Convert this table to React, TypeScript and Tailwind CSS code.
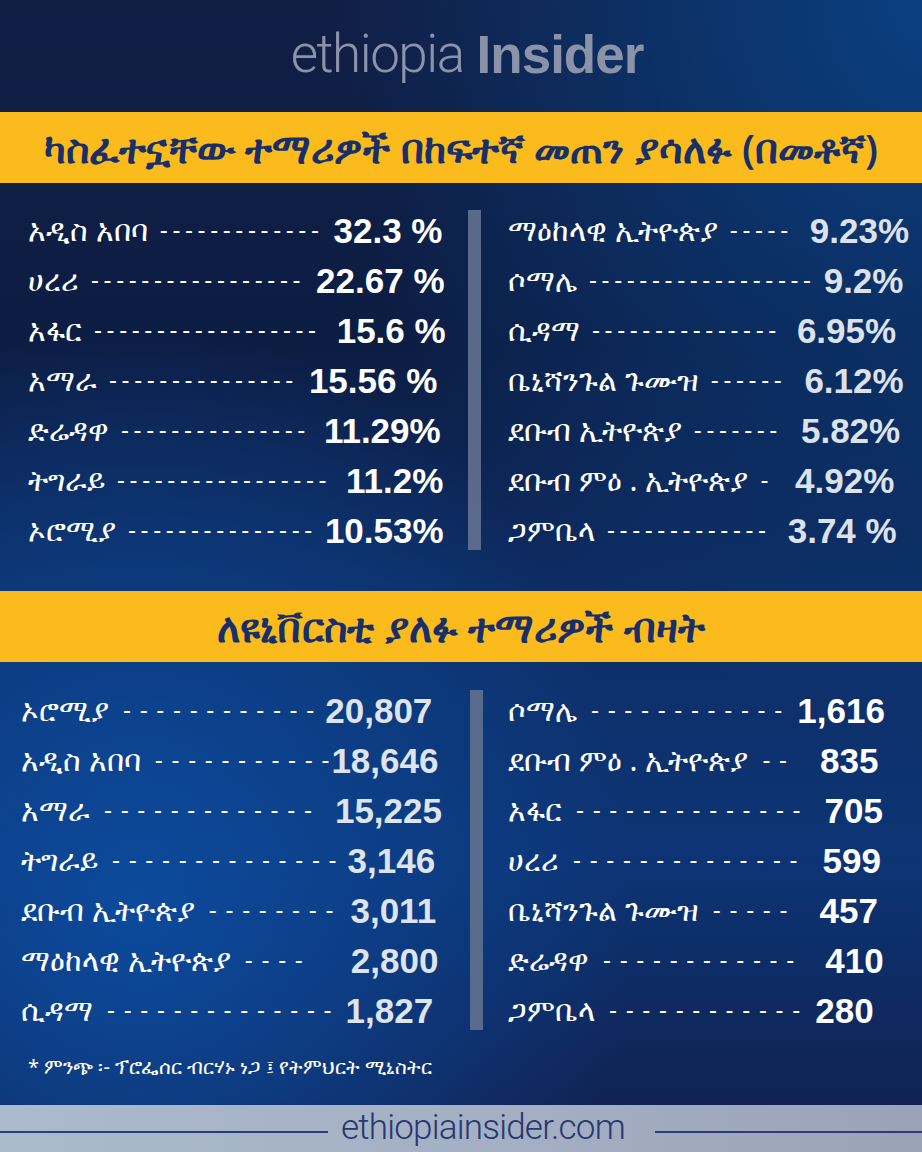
import React from "react";

type Row = { name: string; dashes: number; value: string; adj?: string };

const PERCENT_LEFT: Row[] = [
  { name: "አዲስ አበባ", dashes: 13, value: "32.3 %", adj: "ml-[2px]" },
  { name: "ሀረሪ", dashes: 17, value: "22.67 %", adj: "ml-[3px]" },
  { name: "አፋር", dashes: 18, value: "15.6 %", adj: "ml-[8px]" },
  { name: "አማራ", dashes: 15, value: "15.56 %", adj: "ml-[3px]" },
  { name: "ድሬዳዋ", dashes: 15, value: "11.29%", adj: "ml-[6px]" },
  { name: "ትግራይ", dashes: 17, value: "11.2%", adj: "ml-[7px]" },
  { name: "ኦሮሚያ", dashes: 15, value: "10.53%" },
];

const PERCENT_RIGHT: Row[] = [
  { name: "ማዕከላዊ ኢትዮጵያ", dashes: 5, value: "9.23%", adj: "ml-[9px]" },
  { name: "ሶማሌ", dashes: 18, value: "9.2%" },
  { name: "ሲዳማ", dashes: 15, value: "6.95%", adj: "ml-[8px]" },
  { name: "ቤኒሻንጉል ጉሙዝ", dashes: 6, value: "6.12%", adj: "ml-[10px]" },
  { name: "ደቡብ ኢትዮጵያ", dashes: 7, value: "5.82%", adj: "ml-[11px]" },
  { name: "ደቡብ ምዕ . ኢትዮጵያ", dashes: 1, value: "4.92%", adj: "ml-[14px]" },
  { name: "ጋምቤላ", dashes: 13, value: "3.74 %", adj: "ml-[9px]" },
];

const COUNT_LEFT: Row[] = [
  { name: "ኦሮሚያ", dashes: 12, value: "20,807" },
  { name: "አዲስ አበባ", dashes: 11, value: "18,646", adj: "-ml-[9px]" },
  { name: "አማራ", dashes: 13, value: "15,225", adj: "ml-[12px]" },
  { name: "ትግራይ", dashes: 14, value: "3,146" },
  { name: "ደቡብ ኢትዮጵያ", dashes: 8, value: "3,011", adj: "ml-[6px]" },
  { name: "ማዕከላዊ ኢትዮጵያ", dashes: 4, value: "2,800", adj: "ml-[37px]" },
  { name: "ሲዳማ", dashes: 14, value: "1,827", adj: "ml-[3px]" },
];

const COUNT_RIGHT: Row[] = [
  { name: "ሶማሌ", dashes: 12, value: "1,616", adj: "ml-[4px]" },
  { name: "ደቡብ ምዕ . ኢትዮጵያ", dashes: 2, value: "835", adj: "ml-[22px]" },
  { name: "አፋር", dashes: 14, value: "705", adj: "ml-[13px]" },
  { name: "ሀረሪ", dashes: 14, value: "599", adj: "ml-[14px]" },
  { name: "ቤኒሻንጉል ጉሙዝ", dashes: 5, value: "457", adj: "ml-[21px]" },
  { name: "ድሬዳዋ", dashes: 12, value: "410", adj: "ml-[20px]" },
  { name: "ጋምቤላ", dashes: 12, value: "280", adj: "ml-[4px]" },
];

const ETHIOPIC = "font-['Noto_Sans','DejaVu_Sans',sans-serif]";

function Banner({ children }: { children: React.ReactNode }) {
  return (
    <div
      className={`flex h-[71px] items-center justify-center bg-[#fbbb1d] ${ETHIOPIC} text-[40px] font-semibold leading-none text-[#17306b]`}
    >
      {children}
    </div>
  );
}

function StatRow({
  row,
  spaced,
  valueColor,
}: {
  row: Row;
  spaced?: boolean;
  valueColor: string;
}) {
  const dashes = spaced
    ? Array(row.dashes).fill("-").join(" ")
    : "-".repeat(row.dashes);
  return (
    <div className="flex h-[50px] items-center whitespace-nowrap">
      <span className={`${ETHIOPIC} text-[30px] leading-none text-white`}>
        {row.name}
      </span>
      <span
        className={
          spaced
            ? "ml-[14px] mr-[10px] font-['Liberation_Sans',sans-serif] text-[24px] leading-none tracking-[1px] text-white"
            : "ml-[12px] mr-[8px] font-['Liberation_Sans',sans-serif] text-[24px] leading-none tracking-[4.6px] text-white"
        }
      >
        {dashes}
      </span>
      <span
        className={`font-['Liberation_Sans',sans-serif] text-[35px] font-bold leading-none ${valueColor} ${row.adj ?? ""}`}
      >
        {row.value}
      </span>
    </div>
  );
}

function Divider() {
  return <div className="w-[13px] self-stretch bg-[#62718f]/90" />;
}

export default function App() {
  return (
    <div className="relative flex h-[1152px] w-[922px] flex-col overflow-hidden bg-[radial-gradient(ellipse_at_15%_78%,#0c4a9c_0%,rgba(12,74,156,0)_45%),radial-gradient(ellipse_at_100%_0%,#0a3f80_0%,rgba(10,63,128,0)_45%),linear-gradient(180deg,#111f45_0%,#0c1d44_30%,#0e2f68_55%,#0c3474_75%,#121f4d_100%)]">
      {/* logo */}
      <div className="flex h-[112px] items-center justify-center pb-[4px] pl-[12px] text-[53px] leading-none tracking-[-1.5px] text-[#8a93a7]">
        <span className="font-['Roboto',sans-serif] font-light">ethiopia</span>
        <span className="ml-[13px] font-['Liberation_Sans',sans-serif] font-bold tracking-[-1px]">
          Insider
        </span>
      </div>

      <Banner>ካስፈተኗቸው ተማሪዎች በከፍተኛ መጠን ያሳለፉ (በመቶኛ)</Banner>

      {/* percentages */}
      <div className="flex pt-[22px]">
        <div className="flex w-[443px] flex-col pl-[28px]">
          {PERCENT_LEFT.map((r) => (
            <StatRow key={r.name} row={r} valueColor="text-white" />
          ))}
        </div>
        <div className="ml-[25px] flex py-[5px]">
          <Divider />
        </div>
        <div className="flex w-[441px] flex-col pl-[27px]">
          {PERCENT_RIGHT.map((r) => (
            <StatRow key={r.name} row={r} valueColor="text-[#dde1ea]" />
          ))}
        </div>
      </div>

      <div className="mt-[36px]">
        <Banner>ለዩኒቨርስቲ ያለፉ ተማሪዎች ብዛት</Banner>
      </div>

      {/* counts */}
      <div className="flex pt-[23px]">
        <div className="flex w-[438px] flex-col pl-[21px]">
          {COUNT_LEFT.map((r) => (
            <StatRow key={r.name} row={r} spaced valueColor="text-[#dfe3ec]" />
          ))}
        </div>
        <div className="ml-[32px] flex py-[5px]">
          <Divider />
        </div>
        <div className="flex w-[439px] flex-col pl-[25px]">
          {COUNT_RIGHT.map((r) => (
            <StatRow key={r.name} row={r} spaced valueColor="text-white" />
          ))}
        </div>
      </div>

      <div
        className={`mt-[22px] pl-[28px] ${ETHIOPIC} text-[20px] leading-none text-white`}
      >
        * ምንጭ ፡- ፕሮፌሰር ብርሃኑ ነጋ ፤ የትምህርት ሚኒስትር
      </div>

      {/* footer */}
      <div className="mt-auto flex h-[47px] items-center bg-[linear-gradient(90deg,#abbacd_0%,#a3aec2_60%,#9aa2b7_100%)]">
        <div className="mt-[6px] h-[2px] w-[328px] bg-[#2c3d78]" />
        <span className="pl-[13px] pr-[30px] pb-[2px] font-['Roboto',sans-serif] text-[35px] font-light leading-none tracking-[-0.8px] text-[#283770]">
          ethiopiainsider.com
        </span>
        <div className="mt-[6px] h-[2px] flex-1 bg-[#2c3d78]" />
      </div>
    </div>
  );
}
